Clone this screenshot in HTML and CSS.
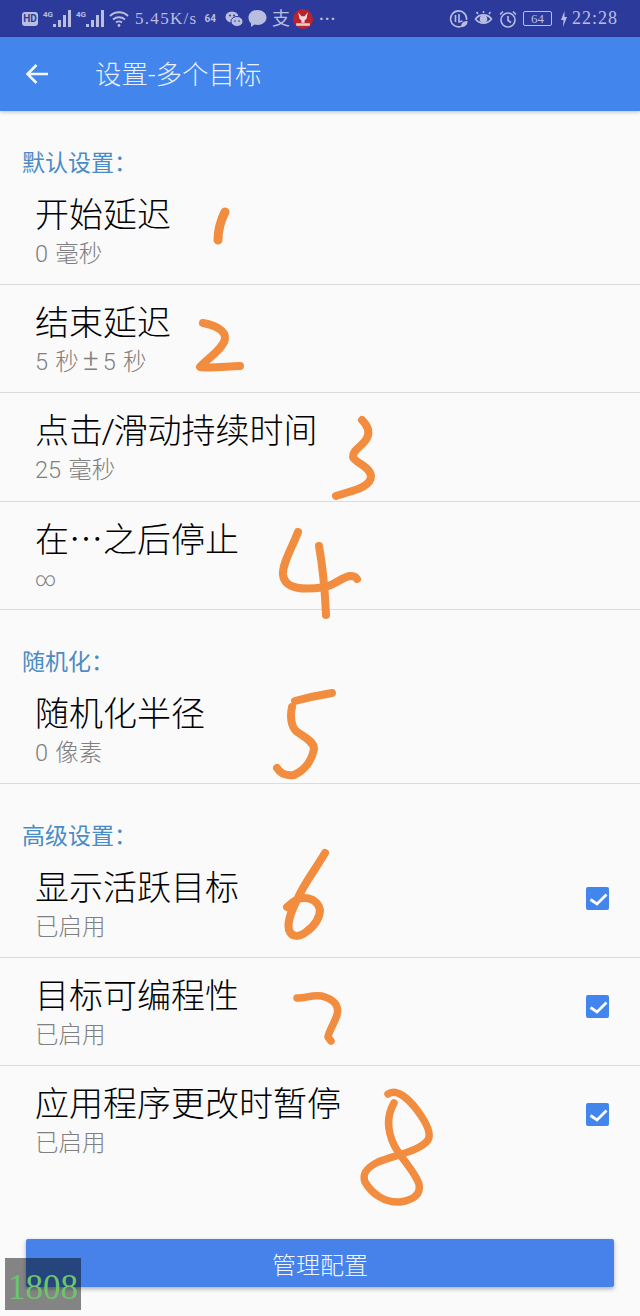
FILE: index.html
```html
<!DOCTYPE html>
<html lang="zh-CN">
<head>
    <meta charset="UTF-8">
    <meta name="viewport" content="width=device-width, initial-scale=1.0">
    <title>设置-多个目标</title>
    <link rel="stylesheet" href="styles.css">
</head>
<body>
    <div class="container">
        <div class="status-bar">
            <div class="status-left">
                <span class="hd-badge">HD</span>
                <span class="signal">
                    <span class="signal-label">4G</span>
                    <svg width="18" height="17" viewBox="0 0 18 17"><path d="M0 14h3v3H0zM5 10h3v7H5zM10 5h3v12h-3zM15 0h3v17h-3z" fill="#b9bedf"/></svg>
                </span>
                <span class="signal">
                    <span class="signal-label">4G</span>
                    <svg width="18" height="17" viewBox="0 0 18 17"><path d="M0 14h3v3H0zM5 10h3v7H5zM10 5h3v12h-3zM15 0h3v17h-3z" fill="#b9bedf"/></svg>
                </span>
                <svg class="wifi" width="20" height="17" viewBox="0 0 20 17" fill="none" stroke="#b9bedf" stroke-width="1.8"><path d="M1 6c5-5 13-5 18 0M4 9.500c3.500-3 8.500-3 12 0M7 12.500c2-1.500 4-1.500 6 0"/><circle cx="10" cy="15.500" r="1.400" fill="#b9bedf" stroke="none"/></svg>
                <span class="net-speed">5.45K/s</span>
                <span class="small-num">64</span>
                <svg class="wechat" width="18" height="16" viewBox="0 0 18 16"><ellipse cx="7" cy="6" rx="6.500" ry="5.500" fill="#b9bedf"/><ellipse cx="12" cy="10.500" rx="6" ry="5" fill="#b9bedf" stroke="#2c3a9c"/><circle cx="5" cy="4.500" r="1" fill="#2c3a9c"/><circle cx="9" cy="4.500" r="1" fill="#2c3a9c"/><circle cx="10" cy="10" r=".8" fill="#2c3a9c"/><circle cx="14" cy="10" r=".8" fill="#2c3a9c"/></svg>
                <svg class="bubble" width="19" height="17" viewBox="0 0 19 17"><path d="M9.500 0c5 0 9 3.300 9 7.500S14.500 15 9.500 15c-1 0-2-.1-3-.4L3 17v-3.700C1.400 12 .5 9.900.5 7.500.5 3.300 4.500 0 9.500 0z" fill="#b9bedf"/></svg>
                <span class="alipay">支</span>
                <svg class="app-logo" width="20" height="20" viewBox="0 0 19 19"><circle cx="9.500" cy="9.500" r="9.500" fill="#b5252f"/><path d="M5 3l3 4h3l3-4-1 6-2 2v2H8v-2L6 9z" fill="#f3d9d9"/><rect x="3" y="13.500" width="13" height="2.500" fill="#e8c9c9"/></svg>
                <span class="more-dots">···</span>
            </div>
            <div class="status-right">
                <svg width="19" height="19" viewBox="0 0 19 19" fill="none" stroke="#b9bedf" stroke-width="1.6"><path d="M12 17.500a8 8 0 1 1 5.500-6.500"/><path d="M6.500 6v7M10 5v8l3.500-1"/><path d="M12 18c0-4 2.500-6 6.500-6 0 4-2.500 6-6.500 6z" fill="#b9bedf" stroke="none"/></svg>
                <svg width="19" height="17" viewBox="0 0 19 17" fill="none" stroke="#b9bedf" stroke-width="1.6"><path d="M1.500 9c4-5.500 12-5.500 16 0-4 5.500-12 5.500-16 0z"/><circle cx="9.500" cy="9" r="3" fill="#b9bedf"/><path d="M4 4L2.500 2M9.500 3V1M15 4l1.500-2"/></svg>
                <svg width="18" height="18" viewBox="0 0 18 18" fill="none" stroke="#b9bedf" stroke-width="1.6"><circle cx="9" cy="10" r="7"/><path d="M9 6v4.500l3 2M1 4.500L4 1.500M17 4.500L14 1.500"/></svg>
                <span class="battery"><span class="battery-level">64</span></span>
                <svg class="bolt" width="6" height="16" viewBox="0 0 6 16"><path d="M3.500 0L0 9h2.500L2 16l4-10H3.500z" fill="#b9bedf"/></svg>
                <span class="clock">22:28</span>
            </div>
        </div>

        <header class="app-bar">
            <svg class="back-icon" width="24" height="22" viewBox="0 0 24 22" fill="none" stroke="#f2f6fe" stroke-width="2.6"><path d="M23 11H3M11.500 2L2.500 11l9 9"/></svg>
            <span class="app-title">设置-多个目标</span>
        </header>

        <main class="settings">
            <section class="group">
                <h2 class="group-title">默认设置：</h2>
                <div class="row">
                    <div class="row-text"><div class="row-title">开始延迟</div><div class="row-sub">0 毫秒</div></div>
                </div>
                <div class="row">
                    <div class="row-text"><div class="row-title">结束延迟</div><div class="row-sub">5 秒<span class="plus-minus">±</span>5 秒</div></div>
                </div>
                <div class="row">
                    <div class="row-text"><div class="row-title">点击<span class="slash">/</span>滑动持续时间</div><div class="row-sub">25 毫秒</div></div>
                </div>
                <div class="row">
                    <div class="row-text"><div class="row-title">在⋯之后停止</div><div class="row-sub infinity">∞</div></div>
                </div>
            </section>
            <section class="group">
                <h2 class="group-title">随机化：</h2>
                <div class="row">
                    <div class="row-text"><div class="row-title">随机化半径</div><div class="row-sub">0 像素</div></div>
                </div>
            </section>
            <section class="group">
                <h2 class="group-title">高级设置：</h2>
                <div class="row">
                    <div class="row-text"><div class="row-title">显示活跃目标</div><div class="row-sub">已启用</div></div>
                    <span class="checkbox"><svg width="23" height="23" viewBox="0 0 23 23" fill="none" stroke="#fff" stroke-width="2.8"><path d="M4.500 12.500l6.500 4.500 9.500-9.500"/></svg></span>
                </div>
                <div class="row">
                    <div class="row-text"><div class="row-title">目标可编程性</div><div class="row-sub">已启用</div></div>
                    <span class="checkbox"><svg width="23" height="23" viewBox="0 0 23 23" fill="none" stroke="#fff" stroke-width="2.8"><path d="M4.500 12.500l6.500 4.500 9.500-9.500"/></svg></span>
                </div>
                <div class="row row-last">
                    <div class="row-text"><div class="row-title">应用程序更改时暂停</div><div class="row-sub">已启用</div></div>
                    <span class="checkbox"><svg width="23" height="23" viewBox="0 0 23 23" fill="none" stroke="#fff" stroke-width="2.8"><path d="M4.500 12.500l6.500 4.500 9.500-9.500"/></svg></span>
                </div>
            </section>
        </main>

        <div class="footer">
            <button class="manage-button">管理配置</button>
        </div>
    </div>

    <!-- hand drawn numbers on top of the screenshot -->
    <svg class="scribbles" width="640" height="1316" viewBox="0 0 640 1316" fill="none" stroke="#f28c3f" stroke-width="8" stroke-linecap="round" stroke-linejoin="round">
        <path d="M225 212C221 220 218 230 218 240" stroke-width="9"/>
        <path d="M203 323C214 325 226 330 225 339C223 349 208 358 200 367C212 369 228 366 240 366"/>
        <path d="M362 420C368 426 370 432 367 438C363 446 352 450 353 457C355 463 370 466 371 476C371 488 350 491 336 496"/>
        <path d="M298 532C292 548 282 564 283 575C285 590 305 590 325 587C335 585 342 577 350 576C353 576 356 577 357 579"/>
        <path d="M319 546C323 568 325 592 326 615"/>
        <path d="M332 693C320 695 306 698 295 701"/>
        <path d="M292 707C290 716 291 726 296 731C304 737 314 741 314 749C312 760 305 770 294 775C286 776 280 773 277 768"/>
        <path d="M325 853C315 870 303 885 297 900C291 912 287 922 289 930C292 938 300 937 306 932C315 926 320 917 320 910C318 900 308 896 298 899C294 901 290 904 287 907"/>
        <path d="M297 998C305 999 315 993 325 997C336 1001 339 1007 337 1015C334 1024 329 1031 328 1037L331 1041" stroke-width="7.5"/>
        <path d="M388 1094C396 1088 408 1098 417 1110C426 1122 432 1133 428 1140C420 1151 395 1155 378 1162C366 1168 362 1174 365 1182C372 1194 385 1203 400 1202C414 1200 421 1194 419 1184C414 1170 402 1160 394 1145C387 1130 387 1115 394 1103" stroke-width="7.5"/>
    </svg>

    <div class="frame-counter">1808</div>
</body>
</html>
```

FILE: styles.css
```css
* {
    box-sizing: border-box;
}

body {
    margin: 0;
    background-color: #fafafa;
    font-family: Roboto, "Noto Sans CJK SC", sans-serif;
    color: #1a1a1a;
}

.container {
    display: flex;
    flex-direction: column;
    height: 100vh;
}

.status-bar {
    display: flex;
    justify-content: space-between;
    align-items: center;
    flex-shrink: 0;
    height: 37px;
    padding: 0 22px 0 22px;
    background-color: #2c3a9c;
    color: #b9bedf;
}

.status-left,
.status-right {
    display: flex;
    align-items: center;
}

.hd-badge {
    width: 16px;
    height: 14px;
    border-radius: 3px;
    background-color: #b9bedf;
    color: #2c3a9c;
    font-size: 10px;
    font-weight: bold;
    line-height: 14px;
    text-align: center;
}

.signal {
    display: flex;
    align-items: flex-start;
    margin-left: 5px;
}

.signal-label {
    width: 10px;
    font-size: 8px;
    font-weight: bold;
    line-height: 10px;
}

.wifi {
    margin-left: 5px;
}

.net-speed {
    margin-left: 6px;
    font-family: "Liberation Serif", serif;
    font-size: 17px;
    letter-spacing: 1.3px;
}

.small-num {
    margin-left: 7px;
    font-size: 10px;
    font-weight: bold;
}

.wechat {
    margin-left: 9px;
}

.bubble {
    margin-left: 5px;
}

.alipay {
    margin-left: 5px;
    font-size: 18px;
    line-height: 18px;
}

.app-logo {
    margin-left: 3px;
}

.more-dots {
    margin-left: 6px;
    font-size: 16px;
    font-weight: bold;
    letter-spacing: 1px;
}

.status-right svg {
    margin-right: 6px;
}

.battery {
    display: block;
    width: 29px;
    height: 15px;
    margin-right: 9px;
    border: 1px solid #b9bedf;
    border-radius: 2px;
    font-family: "Liberation Serif", serif;
    font-size: 13px;
    line-height: 13px;
    text-align: center;
}

.status-right .bolt {
    margin-right: 5px;
}

.clock {
    font-family: "Liberation Serif", serif;
    font-size: 18px;
    letter-spacing: 1px;
}

.app-bar {
    display: flex;
    align-items: center;
    flex-shrink: 0;
    height: 74px;
    padding-left: 25px;
    background-color: #4285ec;
    box-shadow: 0 1px 4px rgba(0, 0, 0, 0.25);
}

.back-icon {
    margin-right: 46px;
}

.app-title {
    margin-bottom: 3px;
    font-size: 26.5px;
    font-weight: 300;
    color: #e9f0fd;
}

.settings {
    flex: 1;
    padding-top: 36px;
}

.group {
    margin-bottom: 36px;
}

.group-title {
    margin: 0;
    padding: 3px 0 0 22px;
    font-size: 23px;
    font-weight: normal;
    line-height: 27px;
    color: #4a8cc4;
}

.row {
    display: flex;
    justify-content: space-between;
    height: 108.2px;
    padding: 18px 31px 0 35px;
    border-bottom: 1px solid #dcdcdc;
}

.row-last {
    border-bottom: none;
}

.row-title {
    font-size: 34px;
    font-weight: 300;
    line-height: 40px;
    color: #000;
}

.slash {
    margin: 0 -1.5px;
}

.row-sub {
    margin-top: 4px;
    font-size: 23.5px;
    font-weight: 300;
    line-height: 30px;
    word-spacing: 1.5px;
    color: #808080;
}

.plus-minus {
    display: inline-block;
    width: 24px;
    font-size: 30px;
    line-height: 26px;
    text-align: center;
}

.infinity {
    font-size: 20px;
}

.checkbox {
    display: flex;
    width: 23px;
    height: 23px;
    margin-top: 19px;
    border-radius: 2px;
    background-color: #4285ec;
}

.footer {
    flex-shrink: 0;
    padding: 0 26px 29px;
}

.manage-button {
    display: block;
    width: 100%;
    height: 48px;
    border: none;
    border-radius: 2px;
    background-color: #4682ea;
    box-shadow: 0 2px 4px rgba(0, 0, 0, 0.3);
    color: #f0f5fe;
    font-family: inherit;
    font-size: 24px;
    font-weight: 300;
}

.scribbles {
    position: absolute;
    top: 0;
    left: 0;
    pointer-events: none;
}

.frame-counter {
    position: absolute;
    top: 1258px;
    left: 5px;
    width: 76px;
    height: 52px;
    padding-top: 10px;
    background-color: rgba(0, 0, 0, 0.47);
    color: #6cc56c;
    font-family: "Liberation Serif", serif;
    font-size: 35px;
    line-height: 40px;
    text-align: center;
}
```
